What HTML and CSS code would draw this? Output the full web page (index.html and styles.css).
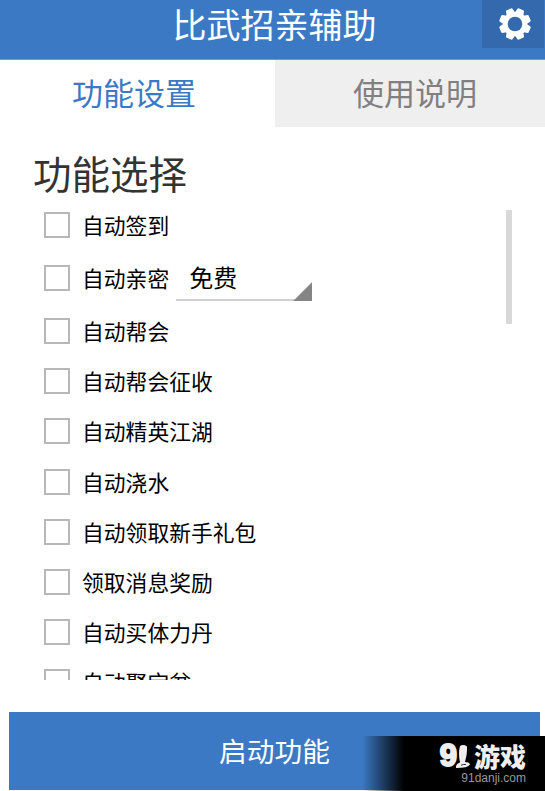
FILE: index.html
```
<!DOCTYPE html>
<html lang="zh-CN">
<head>
	<meta charset="UTF-8">
	<meta name="viewport" content="width=device-width, initial-scale=1.0">
	<title>比武招亲辅助</title>
	<link rel="stylesheet" href="styles.css">
</head>
<body>
	<header class="header">
		<h1>比武招亲辅助</h1>
		<button class="settings" aria-label="设置">
			<svg width="32" height="32" viewBox="-16 -16 32 32">
				<g fill="#fff">
					<g id="teeth">
						<path id="tooth" d="M-4.6 -10 L-3.6 -14.8 Q-3.3 -15.9 -2.2 -15.9 H2.2 Q3.3 -15.9 3.6 -14.8 L4.6 -10z" transform="rotate(22.5)"/>
						<use href="#tooth" transform="rotate(45)"/>
						<use href="#tooth" transform="rotate(90)"/>
						<use href="#tooth" transform="rotate(135)"/>
					</g>
					<use href="#teeth" transform="rotate(180)"/>
					<circle r="12.2"/>
				</g>
				<circle r="7.3" fill="#346aad"/>
			</svg>
		</button>
	</header>

	<nav class="tabs">
		<a class="tab active">功能设置</a>
		<a class="tab">使用说明</a>
	</nav>

	<main class="content">
		<h2>功能选择</h2>
		<div class="list">
			<div class="items">
				<label class="item"><input type="checkbox">自动签到</label>
				<div class="item item-select">
					<label><input type="checkbox">自动亲密</label>
					<div class="spinner">免费</div>
				</div>
				<label class="item"><input type="checkbox">自动帮会</label>
				<label class="item"><input type="checkbox">自动帮会征收</label>
				<label class="item"><input type="checkbox">自动精英江湖</label>
				<label class="item"><input type="checkbox">自动浇水</label>
				<label class="item"><input type="checkbox">自动领取新手礼包</label>
				<label class="item"><input type="checkbox">领取消息奖励</label>
				<label class="item"><input type="checkbox">自动买体力丹</label>
				<label class="item"><input type="checkbox">自动聚宝盆</label>
			</div>
			<div class="scrollbar"></div>
		</div>
	</main>

	<button class="start">启动功能</button>

	<div class="watermark">
		<div class="brand">
			<span class="nine">9</span>
			<svg class="one" width="14" height="24" viewBox="0 0 14 24">
				<path d="M4 1 Q7.5 -1 11 1.5 Q11.5 9 9 17 Q13.5 17 14 19.5 Q12 23 0 23 Q-0.5 19 4 17.5 Q2 8 4 1z" fill="#eee"/>
				<path d="M5 20.3 Q7.5 19 10 19.5" stroke="#000" stroke-width=".8" fill="none"/>
			</svg>
			<span class="name">游戏</span>
		</div>
		<div class="site">91danji.com</div>
	</div>
</body>
</html>
```
FILE: styles.css
```
* {
	box-sizing: border-box;
	margin: 0;
	padding: 0;
}
body {
	width: 545px;
	height: 791px;
	overflow: hidden;
	position: relative;
	background: #fff;
	color: #000;
	font-family: "Noto Sans CJK SC", sans-serif;
}
h1, h2 {
	font-weight: 400;
}
button {
	border: none;
	font-family: inherit;
}

.header {
	display: grid;
	grid-template-columns: 68px 1fr 68px;
	height: 60px;
	background: #3c79c5;
	border-bottom: 1px solid #6b9bd5;
}
.header h1 {
	grid-column: 2;
	color: #fff;
	font-size: 34px;
	line-height: 48px;
	text-align: center;
	padding-left: 4px;
}
.settings {
	display: flex;
	align-items: center;
	justify-content: center;
	width: 62px;
	height: 48px;
	margin-left: 5px;
	padding-left: 3px;
	background: #346aad;
}

.tabs {
	display: flex;
	height: 67px;
}
.tab {
	flex: 1;
	background: #efefef;
	color: #808080;
	font-size: 31px;
	line-height: 64px;
	text-align: center;
	padding-left: 10px;
}
.tab.active {
	flex: 0 0 275px;
	padding: 0 7px 0 0;
	background: #fff;
	color: #3c79c5;
}

.content {
	height: 585px;
}
.content h2 {
	padding: 19px 0 1px 33px;
	color: #333;
	font-size: 38.5px;
	line-height: 52px;
}
.list {
	display: flex;
	justify-content: space-between;
	height: 481px;
	padding: 0 33px 0 44px;
	overflow: hidden;
}
.item,
.item label {
	display: flex;
	align-items: center;
	font-size: 21.8px;
	line-height: 30px;
}
.item {
	height: 50.2px;
}
.item:first-child {
	height: 51px;
}
.item-select {
	height: 56px;
}
.item input {
	appearance: none;
	width: 26px;
	height: 26px;
	margin-right: 12px;
	border: 2px solid #b8b8b8;
}
.spinner {
	width: 136px;
	height: 46px;
	margin-left: 7px;
	padding-left: 13px;
	font-size: 24px;
	line-height: 43px;
	background:
		linear-gradient(135deg, transparent 49%, #858585 52%) right bottom / 19px 19px no-repeat,
		linear-gradient(#d0d0d0, #d0d0d0) left bottom / 100% 2px no-repeat;
}
.scrollbar {
	width: 6px;
	height: 114px;
	margin-top: 11px;
	border-radius: 1px;
	background: #d8d8d8;
}

.start {
	display: block;
	width: 531px;
	height: 78px;
	margin-left: 9px;
	padding-bottom: 2px;
	background: #3c79c5;
	color: #fff;
	font-size: 27.7px;
	line-height: 76px;
}

.watermark {
	position: absolute;
	right: 0;
	bottom: 0;
	width: 183px;
	height: 55px;
	padding: 7px 19px 0 0;
	background: linear-gradient(90deg, transparent, #000 42px);
	color: #eee;
}
.brand {
	display: flex;
	justify-content: flex-end;
	height: 28px;
	line-height: 26px;
}
.nine {
	font-family: "Liberation Sans", sans-serif;
	font-size: 31px;
	font-weight: 700;
	-webkit-text-stroke: 2px #eee;
}
.one {
	margin: 2px 4px 0 -1px;
}
.name {
	font-size: 26px;
	font-weight: 900;
}
.site {
	color: #999;
	font-family: "Liberation Sans", sans-serif;
	font-size: 12px;
	line-height: 14px;
	text-align: right;
}
```
